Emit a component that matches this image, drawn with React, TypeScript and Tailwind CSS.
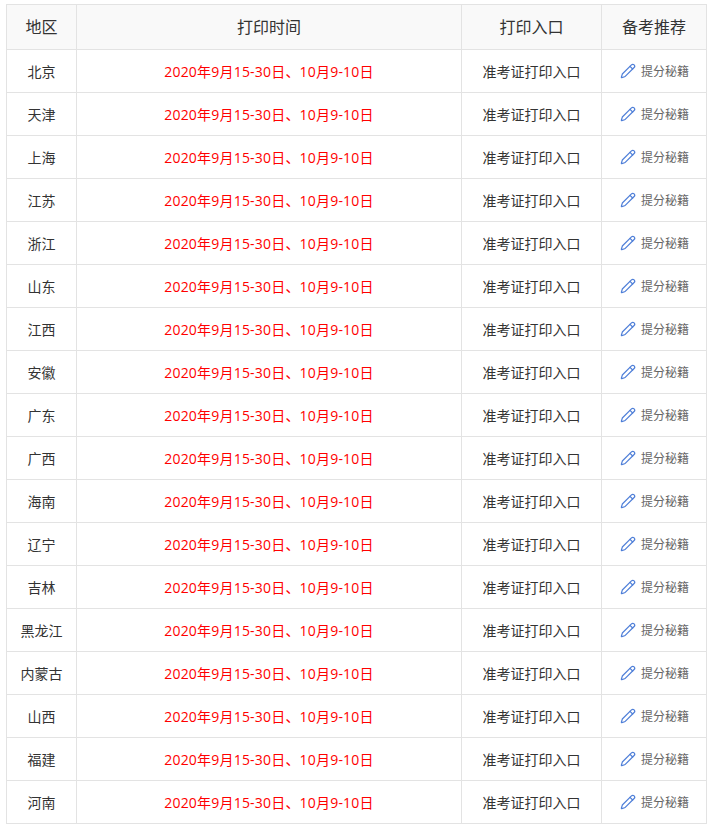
import { Pencil } from "lucide-react";

const regions = [
  "北京", "天津", "上海", "江苏", "浙江", "山东", "江西", "安徽", "广东",
  "广西", "海南", "辽宁", "吉林", "黑龙江", "内蒙古", "山西", "福建", "河南",
];

const FONT = '"Open Sans", "Noto Sans CJK SC", sans-serif';

export default function App() {
  return (
    <div className="bg-white pl-[6px] pt-[4px]" style={{ fontFamily: FONT }}>
      <table className="w-[700px] table-fixed border-collapse text-[#333]">
        <colgroup>
          <col className="w-[70px]" />
          <col className="w-[385px]" />
          <col className="w-[140px]" />
          <col className="w-[105px]" />
        </colgroup>
        <thead>
          <tr className="h-[45px] bg-[#f9f9f9] text-[16px]">
            <th className="border border-[#e3e3e3] font-normal">地区</th>
            <th className="border border-[#e3e3e3] font-normal">打印时间</th>
            <th className="border border-[#e3e3e3] font-normal">打印入口</th>
            <th className="border border-[#e3e3e3] font-normal">备考推荐</th>
          </tr>
        </thead>
        <tbody>
          {regions.map((r) => (
            <tr key={r} className="h-[43px] text-[14px]">
              <td className="border border-[#e3e3e3] text-center">{r}</td>
              <td className="border border-[#e3e3e3] text-center tracking-[0.2px] text-[#ff0000]">
                2020年9月15-30日、10月9-10日
              </td>
              <td className="border border-[#e3e3e3] text-center">准考证打印入口</td>
              <td className="border border-[#e3e3e3]">
                <div className="flex items-center justify-center gap-[5px] pl-[1px]">
                  <Pencil className="h-[16px] w-[16px] text-[#4f7fd8]" strokeWidth={1.8} />
                  <span className="pt-[2px] text-[12px] text-[#666]">提分秘籍</span>
                </div>
              </td>
            </tr>
          ))}
        </tbody>
      </table>
    </div>
  );
}
